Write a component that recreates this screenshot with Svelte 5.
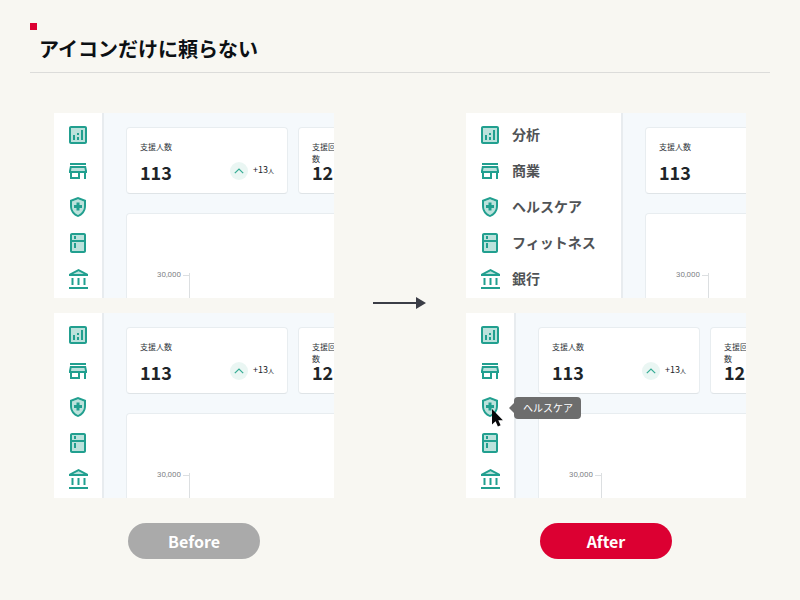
<script lang="ts">
	interface MenuItem {
		label: string;
		tint: string;
		line: string;
	}

	const menu: MenuItem[] = [
		{
			label: '分析',
			tint: 'M5 5h14v14H5z',
			line: 'M19 3H5c-1.1 0-2 .9-2 2v14c0 1.1.9 2 2 2h14c1.1 0 2-.9 2-2V5c0-1.1-.9-2-2-2zm0 16H5V5h14v14zM7 12h2v5H7zM15 7h2v10h-2zM11 14h2v3h-2zM11 10h2v2h-2z'
		},
		{
			label: '商業',
			tint: 'M5.64 9l-.6 3h13.92l-.6-3z',
			line: 'M18.36 9l.6 3H5.04l.6-3h12.72M20 4H4v2h16V4zm0 3H4l-1 5v2h1v6h10v-6h4v6h2v-6h1v-2l-1-5zM6 18v-4h6v4H6z'
		},
		{
			label: 'ヘルスケア',
			tint: 'M6 6.39v4.7c0 4 2.55 7.7 6 8.83 3.45-1.13 6-4.82 6-8.83v-4.7l-6-2.25z',
			line: 'M10.5 13H8v-3h2.5V7.5h3V10H16v3h-2.5v2.5h-3V13zM12 2L4 5v6.09c0 5.05 3.41 9.76 8 10.91 4.59-1.15 8-5.86 8-10.91V5l-8-3zm6 9.09c0 4-2.55 7.7-6 8.83-3.45-1.13-6-4.82-6-8.83v-4.7l6-2.25 6 2.25v4.7z'
		},
		{
			label: 'フィットネス',
			tint: 'M6 4h12v5H6zM6 11h12v9H6z',
			line: 'M18 2.01L6 2c-1.1 0-2 .89-2 2v16c0 1.1.9 2 2 2h12c1.1 0 2-.9 2-2V4c0-1.11-.9-1.99-2-1.99zM18 20H6v-9.02h12V20zm0-11H6V4h12v5zM8 5h2v3H8V5zm0 7h2v5H8v-5z'
		},
		{
			label: '銀行',
			tint: 'M7.29 7h10.42L12.5 4.26z',
			line: 'M7.5 11h-2v7h2v-7zm6 0h-2v7h2v-7zm8.5 9H3v2h19v-2zm-2.5-9h-2v7h2v-7zm-7-6.74L17.71 7H7.29l5.21-2.74m0-2.26L3 7v2h19V7l-9.5-5z'
		}
	];
</script>

{#snippet panel(labels: boolean, hovered: string)}
	<div class="panel">
		<nav class="sidebar" class:wide={labels}>
			{#each menu as item}
				<a class="item" href="#top" aria-label={item.label}>
					<svg class="icon" viewBox="0 0 24 24" aria-hidden="true">
						<path class="tint" d={item.tint} />
						<path d={item.line} />
					</svg>
					{#if labels}
						<span>{item.label}</span>
					{/if}
					{#if item.label === hovered}
						<span class="tooltip" role="tooltip">{item.label}</span>
						<svg class="cursor" viewBox="0 0 12 18" aria-hidden="true">
							<path d="M1 0v15.4l3.6-3.2 2.3 5.2 2.7-1.2-2.3-5h4.6z" />
						</svg>
					{/if}
				</a>
			{/each}
		</nav>
		<div class="content">
			<div class="cards">
				<section class="card">
					<div class="stat">
						<p class="stat-label">支援人数</p>
						<p class="stat-value">113</p>
					</div>
					<div class="trend">
						<svg class="trend-icon" viewBox="0 0 18 18" aria-hidden="true">
							<circle cx="9" cy="9" r="9" />
							<path d="M4.8 11.2L9 7l4.2 4.2" />
						</svg>
						<span>+13<small>人</small></span>
					</div>
				</section>
				<section class="card">
					<div class="stat narrow">
						<p class="stat-label">支援回数</p>
						<p class="stat-value">12</p>
					</div>
				</section>
			</div>
			<section class="chart">
				<span class="axis-label">30,000</span>
				<span class="tick"></span>
				<span class="axis"></span>
			</section>
		</div>
	</div>
{/snippet}

<div class="slide" id="top">
	<header class="header">
		<span class="mark"></span>
		<h1>アイコンだけに頼らない</h1>
	</header>

	<main class="compare">
		<div class="panels">
			{@render panel(false, '')}
			{@render panel(false, '')}
		</div>
		<svg class="arrow" viewBox="0 0 54 12" aria-hidden="true">
			<path d="M0 5h43V0l10 6-10 6V7H0z" />
		</svg>
		<div class="panels">
			{@render panel(true, '')}
			{@render panel(false, 'ヘルスケア')}
		</div>
		<p class="pill">Before</p>
		<p class="pill after">After</p>
	</main>
</div>

<style>
	:global(body) {
		background: #f8f7f2;
	}

	.slide {
		box-sizing: border-box;
		min-height: 100vh;
		padding: 23px 30px 40px;
		font-family: 'Noto Sans CJK JP', 'Noto Sans', sans-serif;
		color: #202428;
	}

	.slide * {
		box-sizing: border-box;
	}

	h1,
	p {
		margin: 0;
	}

	.header {
		border-bottom: 1px solid #dcdcda;
	}

	.mark {
		display: block;
		width: 7px;
		height: 7px;
		background: #dc0032;
	}

	h1 {
		padding: 4px 9px 8px;
		font-size: 20px;
		line-height: 30px;
		font-weight: bold;
		color: #0c1014;
	}

	.compare {
		display: grid;
		grid-template-columns: minmax(0, 1fr) 132px minmax(0, 1fr);
		row-gap: 25px;
		padding: 40px 24px 0;
	}

	.panels {
		display: flex;
		flex-direction: column;
		gap: 15px;
	}

	.panel {
		display: flex;
		background: #f5f9fc;
		overflow: hidden;
	}

	.sidebar {
		display: flex;
		flex: none;
		flex-direction: column;
		gap: 12px;
		width: 50px;
		padding: 10px 12px 0;
		background: #fff;
		border-right: 2px solid #e8ecef;
	}

	.wide {
		width: 157px;
	}

	.item {
		position: relative;
		display: flex;
		align-items: center;
		gap: 10px;
		font-size: 14px;
		line-height: 22px;
		font-weight: bold;
		color: #505356;
		text-decoration: none;
		white-space: nowrap;
	}

	.item span {
		padding-bottom: 2px;
	}

	.icon {
		flex: none;
		width: 24px;
		height: 24px;
		fill: #219f8f;
	}

	.tint {
		fill: #bce2dc;
	}

	.item .tooltip {
		position: absolute;
		left: 36px;
		top: 2px;
		z-index: 1;
		padding: 0 8px 0 9px;
		border-radius: 4px;
		background: #6d6d6d;
		color: #fff;
		font-size: 10px;
		line-height: 22px;
		font-weight: normal;
	}

	.tooltip::before {
		content: '';
		position: absolute;
		left: -5px;
		top: 5px;
		border: 6px solid transparent;
		border-left: 0;
		border-right-color: #6d6d6d;
	}

	.cursor {
		position: absolute;
		left: 13px;
		top: 14px;
		width: 12px;
		height: 18px;
		fill: #08080a;
	}

	.content {
		flex: 1;
		min-width: 0;
		padding: 14px 0 0 22px;
	}

	.cards {
		display: flex;
		gap: 10px;
		margin-bottom: 19px;
	}

	.card {
		display: flex;
		flex: none;
		align-items: flex-end;
		justify-content: space-between;
		width: 162px;
		padding: 13px;
		background: #fff;
		border: 1px solid #e8edf0;
		border-bottom-color: #dfe4e7;
		border-radius: 4px;
	}

	.stat-label {
		min-height: 24px;
		font-size: 8px;
		line-height: 12px;
		color: #30353a;
	}

	.narrow .stat-label {
		width: 28px;
	}

	.stat-value {
		padding-bottom: 1px;
		font-size: 18px;
		line-height: 14px;
		font-weight: bold;
	}

	.trend {
		display: flex;
		align-items: center;
		gap: 5px;
		font-size: 9px;
		line-height: 18px;
	}

	.trend small {
		font-size: 6px;
	}

	.trend-icon {
		width: 18px;
		height: 18px;
		fill: #eaf6f3;
	}

	.trend-icon path {
		fill: none;
		stroke: #35ab94;
		stroke-width: 1.2;
	}

	.chart {
		display: flex;
		align-items: flex-start;
		width: 480px;
		height: 85px;
		padding: 55px 0 0 30px;
		background: #fff;
		border: 1px solid #e8edf0;
		border-bottom: 0;
		border-radius: 4px 4px 0 0;
	}

	.axis-label {
		font-family: Roboto, 'Liberation Sans', sans-serif;
		font-size: 8px;
		line-height: 12px;
		color: #85888b;
	}

	.tick {
		width: 6px;
		height: 1px;
		margin: 6px 0 0 2px;
		background: #dcdfe1;
	}

	.axis {
		align-self: stretch;
		width: 1px;
		margin-top: 4px;
		background: #dcdfe1;
	}

	.arrow {
		align-self: center;
		justify-self: center;
		width: 54px;
		margin-bottom: 5px;
		fill: #3b3d46;
	}

	.pill {
		justify-self: center;
		width: 132px;
		border-radius: 18px;
		background: #aaa;
		color: #fff;
		font-size: 16px;
		line-height: 36px;
		font-weight: bold;
		text-align: center;
	}

	.after {
		grid-column: 3;
		background: #dc0032;
	}
</style>
